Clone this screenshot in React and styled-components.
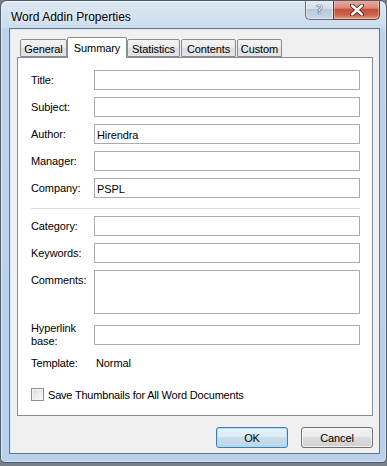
import React from 'react';
import styled, { createGlobalStyle } from 'styled-components';

const GlobalStyle = createGlobalStyle`
  html, body {
    margin: 0;
    padding: 0;
    background: #767e87;
  }
  body {
    font-family: "Liberation Sans", Arial, sans-serif;
    font-size: 11px;
    color: #000;
  }
  * {
    box-sizing: border-box;
  }
`;

const Window = styled.div`
  width: 387px;
  height: 463px;
  border: 1px solid #4f5c6b;
  border-radius: 7px 7px 5px 5px;
  background: linear-gradient(180deg, #dce7f2 0px, #cddcec 26px, #bcd3ea 28px, #b9d1ea 100%);
  box-shadow: inset 1px 1px 0 rgba(255, 255, 255, 0.55), inset -1px -1px 0 rgba(255, 255, 255, 0.35);
  padding: 0 6px 8px 8px;
  display: flex;
  flex-direction: column;
  overflow: hidden;
`;

const TitleBar = styled.div`
  height: 27px;
  display: flex;
  align-items: flex-start;
  flex-shrink: 0;
`;

const TitleText = styled.div`
  margin: 9px 0 0 2px;
  font-size: 12px;
  line-height: 14px;
  color: #000;
  text-shadow: 0 0 6px rgba(255, 255, 255, 0.9);
`;

const CaptionButtons = styled.div`
  margin-left: auto;
  margin-top: -1px;
  display: flex;
`;

const HelpButton = styled.div`
  width: 28px;
  height: 20px;
  border: 1px solid #5f6d80;
  border-top: none;
  border-right: none;
  border-radius: 0 0 0 5px;
  background: linear-gradient(180deg, #e6edf5 0%, #d3dde9 45%, #b9c7d7 50%, #cad6e4 100%);
  box-shadow: inset 0 0 0 1px rgba(255, 255, 255, 0.5);
  display: flex;
  align-items: center;
  justify-content: center;
  font-family: "DejaVu Sans", sans-serif;
  font-size: 13px;
  color: #f4f7fa;
  text-shadow: 0 0 1px #3d4a5a, 0 0 1px #3d4a5a, 0 0 1px #3d4a5a;
`;

const CloseButton = styled.div`
  width: 47px;
  height: 20px;
  border: 1px solid #5e3a36;
  border-top: none;
  border-radius: 0 0 5px 0;
  background: linear-gradient(180deg, #eab2a3 0%, #d98878 42%, #c45039 50%, #cc6249 78%, #e3a183 100%);
  box-shadow: inset 0 0 0 1px rgba(255, 220, 210, 0.45);
  display: flex;
  align-items: center;
  justify-content: center;
`;

const Client = styled.div`
  flex: 1;
  border: 1px solid #62788f;
  background: #f0f0f0;
  box-shadow: inset 1px 1px 0 #d8e5f2;
  padding: 8px 6px 0 7px;
  display: flex;
  flex-direction: column;
`;

const TabStrip = styled.div`
  display: flex;
  align-items: flex-end;
  height: 20px;
  padding-left: 3px;
  position: relative;
  z-index: 1;
`;

const Tab = styled.div`
  width: ${p => p.$w}px;
  margin-left: ${p => p.$ml || 0}px;
  height: ${p => (p.$active ? 21 : 18)}px;
  margin-bottom: ${p => (p.$active ? -1 : 0)}px;
  border: 1px solid #898c95;
  border-bottom: ${p => (p.$active ? 'none' : '1px solid #898c95')};
  border-radius: 2px 2px 0 0;
  background: ${p => (p.$active ? '#fff' : 'linear-gradient(180deg, #f3f3f3 0%, #ebebeb 50%, #dedede 50%, #e5e5e5 100%)')};
  display: flex;
  justify-content: center;
  padding-top: ${p => (p.$active ? 3 : 2)}px;
  font-size: 11px;
  line-height: 14px;
  letter-spacing: -0.1px;
  color: #000;
`;

const Panel = styled.div`
  height: 359px;
  border: 1px solid #898c95;
  background: #fff;
  padding: 12px 12px 0 13px;
  flex-shrink: 0;
`;

const Form = styled.div`
  display: grid;
  grid-template-columns: 63px 1fr;
  row-gap: 7px;
  align-items: center;
`;

const Label = styled.div`
  font-size: 11px;
  line-height: ${p => (p.$lh || 14)}px;
  letter-spacing: -0.1px;
  align-self: ${p => (p.$top ? 'start' : 'center')};
  padding: ${p => (p.$pad ? '1px 0' : '0')};
`;

const Field = styled.div`
  height: ${p => p.$h || 20}px;
  border: 1px solid #ababab;
  background: #fff;
  padding: 3px 0 0 2px;
  font-size: 11px;
  line-height: 14px;
  letter-spacing: -0.1px;
`;

const Value = styled.div`
  font-size: 11px;
  line-height: 14px;
  padding-left: 2px;
  letter-spacing: -0.1px;
`;

const Separator = styled.div`
  grid-column: 1 / -1;
  height: 1px;
  background: #d9dee3;
  margin-top: 3px;
`;

const CheckRow = styled.label`
  display: flex;
  align-items: center;
  gap: 4px;
  margin-top: 18px;
  font-size: 11px;
  letter-spacing: -0.2px;
`;

const CheckBox = styled.span`
  width: 13px;
  height: 13px;
  border: 1px solid #8e8f8f;
  background: linear-gradient(135deg, #d8d8d8 0%, #f0f0f0 60%, #fbfbfb 100%);
  box-shadow: inset 0 0 0 1px #f4f4f4;
  flex-shrink: 0;
`;

const ButtonRow = styled.div`
  display: flex;
  justify-content: flex-end;
  gap: 13px;
  margin-top: 11px;
`;

const Button = styled.div`
  width: 72px;
  height: 21px;
  border: 1px solid ${p => (p.$default ? '#3c7fb1' : '#707070')};
  border-radius: 3px;
  background: ${p =>
    p.$default
      ? 'linear-gradient(180deg, #e9f3f9 0%, #dbeaf4 50%, #c8deec 50%, #bcd6e8 100%)'
      : 'linear-gradient(180deg, #f2f2f2 0%, #ebebeb 50%, #dddddd 50%, #cfcfcf 100%)'};
  box-shadow: inset 0 0 0 1px ${p => (p.$default ? 'rgba(160, 220, 250, 0.8)' : 'rgba(255, 255, 255, 0.7)')};
  display: flex;
  align-items: center;
  justify-content: center;
  font-size: 11px;
  letter-spacing: -0.1px;
`;

const tabs = [
  { name: 'General', w: 47 },
  { name: 'Summary', w: 60, active: true },
  { name: 'Statistics', w: 53 },
  { name: 'Contents', w: 55, ml: 1 },
  { name: 'Custom', w: 45, ml: 1 },
];

const simpleRows = [
  ['Title:', ''],
  ['Subject:', ''],
  ['Author:', 'Hirendra'],
  ['Manager:', ''],
  ['Company:', 'PSPL'],
];

const App = () => {
  return (
    <>
      <GlobalStyle />
      <Window>
        <TitleBar>
          <TitleText>Word Addin Properties</TitleText>
          <CaptionButtons>
            <HelpButton>?</HelpButton>
            <CloseButton>
              <svg width="14" height="12" viewBox="0 0 14 12">
                <path
                  d="M2 1.5 L12 10.5 M12 1.5 L2 10.5"
                  stroke="#4a1f18"
                  strokeWidth="4.2"
                  strokeLinecap="round"
                />
                <path
                  d="M2 1.5 L12 10.5 M12 1.5 L2 10.5"
                  stroke="#ffffff"
                  strokeWidth="2.4"
                  strokeLinecap="round"
                />
              </svg>
            </CloseButton>
          </CaptionButtons>
        </TitleBar>
        <Client>
          <TabStrip>
            {tabs.map(t => (
              <Tab key={t.name} $w={t.w} $ml={t.ml} $active={t.active}>
                {t.name}
              </Tab>
            ))}
          </TabStrip>
          <Panel>
            <Form>
              {simpleRows.map(([label, value]) => (
                <React.Fragment key={label}>
                  <Label>{label}</Label>
                  <Field>{value}</Field>
                </React.Fragment>
              ))}
              <Separator />
              <Label>Category:</Label>
              <Field />
              <Label>Keywords:</Label>
              <Field />
              <Label $top $lh={20}>Comments:</Label>
              <Field $h={44} />
              <Label $lh={13} $pad>
                Hyperlink
                <br />
                base:
              </Label>
              <Field />
              <Label>Template:</Label>
              <Value>Normal</Value>
            </Form>
            <CheckRow>
              <CheckBox />
              Save Thumbnails for All Word Documents
            </CheckRow>
          </Panel>
          <ButtonRow>
            <Button $default>OK</Button>
            <Button>Cancel</Button>
          </ButtonRow>
        </Client>
      </Window>
    </>
  );
};

export default App;
